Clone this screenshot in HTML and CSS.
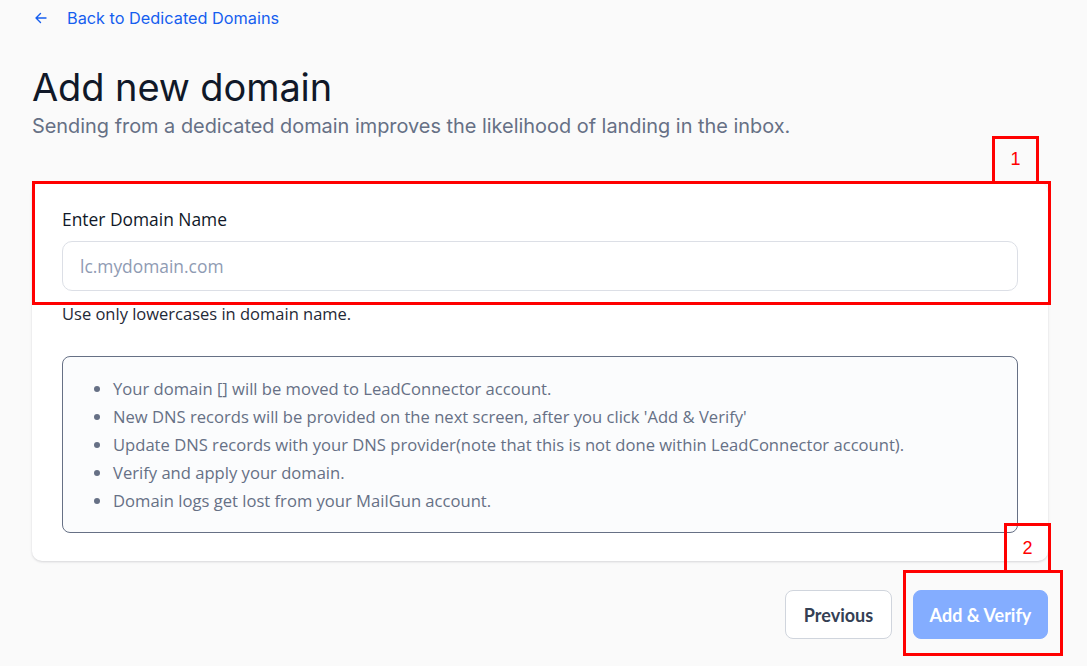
FILE: index.html
```html
<!DOCTYPE html>
<html>
<head>
<meta charset="utf-8">
<link rel="stylesheet" href="styles.css">
</head>
<body>
<div class="page">
  <a class="back" href="#">
    <svg class="back-icon" width="16" height="16" viewBox="0 0 16 16" fill="none" stroke="currentColor" stroke-width="1.4" stroke-linecap="round" stroke-linejoin="round"><path d="M13 8H3M7.5 3.5L3 8l4.5 4.5"/></svg>
    <span>Back to Dedicated Domains</span>
  </a>
  <h1 class="title">Add new domain</h1>
  <p class="subtitle">Sending from a dedicated domain improves the likelihood of landing in the inbox.</p>

  <div class="card">
    <label class="label" for="domain">Enter Domain Name</label>
    <input class="input" id="domain" type="text" placeholder="lc.mydomain.com">
    <p class="help">Use only lowercases in domain name.</p>
    <div class="info">
      <ul class="info-list">
        <li>Your domain [] will be moved to LeadConnector account.</li>
        <li>New DNS records will be provided on the next screen, after you click 'Add &amp; Verify'</li>
        <li>Update DNS records with your DNS provider(note that this is not done within LeadConnector account).</li>
        <li>Verify and apply your domain.</li>
        <li>Domain logs get lost from your MailGun account.</li>
      </ul>
    </div>
  </div>

  <div class="actions">
    <button class="btn btn-secondary">Previous</button>
    <button class="btn btn-primary" disabled>Add &amp; Verify</button>
  </div>

  <div class="mark mark-box1"></div>
  <div class="mark mark-tag1">1</div>
  <div class="mark mark-box2"></div>
  <div class="mark mark-tag2">2</div>
</div>
</body>
</html>
```

FILE: styles.css
```css
* { box-sizing: border-box; }
html, body { margin: 0; padding: 0; }
body {
  background: #fafafa;
  font-family: Inter, "Noto Sans", sans-serif;
  color: #101828;
  width: 1087px;
  height: 666px;
  overflow: hidden;
}
.page {
  position: relative;
  padding: 6px 39px 0 32px;
}
.back {
  display: flex;
  align-items: center;
  gap: 18px;
  color: #155eef;
  text-decoration: none;
  font-size: 16.3px;
  line-height: 24px;
  height: 24px;
}
.back-icon { margin-left: 1px; }
.title {
  margin: 34px 0 0;
  font-size: 38px;
  line-height: 46px;
  font-weight: 400;
  color: #101828;
  letter-spacing: -0.1px;
}
.subtitle {
  margin: 2px 0 0;
  font-size: 19.9px;
  line-height: 28px;
  color: #667085;
}
.card {
  margin-top: 42px;
  background: #fff;
  border-radius: 10px;
  box-shadow: 0 1px 3px rgba(16,24,40,0.10), 0 1px 2px rgba(16,24,40,0.06);
  padding: 26px 30px 28px;
}
.label {
  display: block;
  font-family: "Open Sans", "Noto Sans", sans-serif;
  font-size: 17.4px;
  line-height: 22px;
  color: #101828;
}
.input {
  display: block;
  width: 100%;
  height: 50px;
  margin-top: 11px;
  border: 1px solid #dcdfe6;
  border-radius: 10px;
  padding: 0 17px;
  font-family: "Open Sans", "Noto Sans", sans-serif;
  font-size: 17.4px;
  background: #fff;
  outline: none;
}
.input::placeholder { color: #8f9bb3; }
.help {
  margin: 12px 0 0;
  font-family: "Open Sans", "Noto Sans", sans-serif;
  font-size: 16.5px;
  line-height: 22px;
  color: #1f2937;
}
.info {
  margin-top: 31px;
  border: 1px solid #667085;
  border-radius: 8px;
  background: #fbfcfd;
  padding: 18px 20px 19px;
  height: 177px;
}
.info-list {
  margin: 0;
  padding-left: 30px;
  font-family: "Open Sans", "Noto Sans", sans-serif;
  font-size: 16.6px;
  line-height: 28px;
  color: #667085;
}
.actions {
  display: flex;
  justify-content: flex-end;
  gap: 21px;
  margin-top: 29px;
}
.btn {
  height: 49px;
  border-radius: 8px;
  font-family: Lato, "Noto Sans", sans-serif;
  font-weight: 700;
  font-size: 18px;
  padding: 0;
  white-space: nowrap;
}
.btn-secondary {
  background: #fff;
  border: 1px solid #d0d5dd;
  color: #344054;
  width: 107px;
}
.btn-primary {
  background: #84adff;
  border: 1px solid #84adff;
  color: #fff;
  width: 135px;
}
.mark {
  position: absolute;
  border: 3px solid #ff0000;
}
.mark-box1 { left: 32px; top: 181px; width: 1019px; height: 124px; }
.mark-tag1 { left: 992px; top: 136px; width: 47px; height: 47px; border-bottom: none;
  color: #ff0000; font-family: "Liberation Sans", Arial, sans-serif; font-size: 18px; text-align: center; line-height: 40px; }
.mark-box2 { left: 903px; top: 570px; width: 160px; height: 86px; }
.mark-tag2 { left: 1004px; top: 523px; width: 47px; height: 48px; border-bottom: none;
  color: #ff0000; font-family: "Liberation Sans", Arial, sans-serif; font-size: 18px; text-align: center; line-height: 44px; }
```
